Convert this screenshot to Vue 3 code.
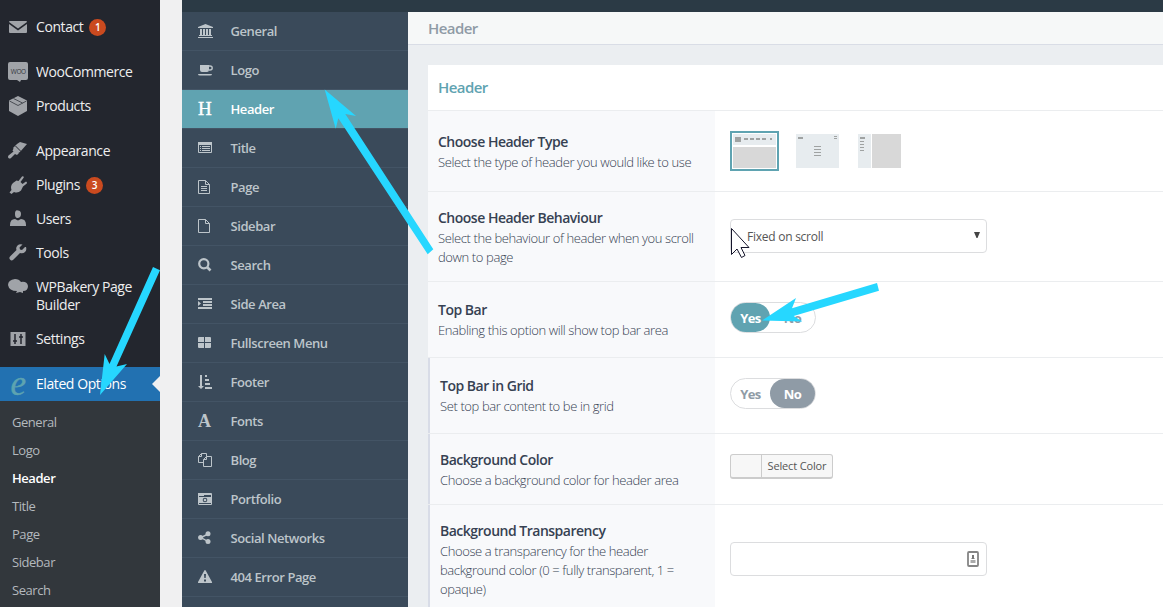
<script setup>
import { ref } from 'vue'

// WordPress admin menu
const adminMenu = [
  { label: 'Contact', icon: 'mail', count: 1, gap: true },
  { label: 'WooCommerce', icon: 'woo' },
  { label: 'Products', icon: 'box', gap: true },
  { label: 'Appearance', icon: 'brush' },
  { label: 'Plugins', icon: 'plug', count: 3 },
  { label: 'Users', icon: 'user' },
  { label: 'Tools', icon: 'wrench' },
  { label: 'WPBakery Page Builder', icon: 'bakery' },
  { label: 'Settings', icon: 'sliders', gap: true },
]
const subMenu = ['General', 'Logo', 'Header', 'Title', 'Page', 'Sidebar', 'Search']

// Theme option tabs
const tabs = [
  { label: 'General', icon: 'bank' },
  { label: 'Logo', icon: 'coffee' },
  { label: 'Header', glyph: 'H' },
  { label: 'Title', icon: 'list' },
  { label: 'Page', icon: 'filetext' },
  { label: 'Sidebar', icon: 'file' },
  { label: 'Search', icon: 'search' },
  { label: 'Side Area', icon: 'indent' },
  { label: 'Fullscreen Menu', icon: 'grid' },
  { label: 'Footer', icon: 'sort' },
  { label: 'Fonts', glyph: 'A' },
  { label: 'Blog', icon: 'copy' },
  { label: 'Portfolio', icon: 'camera' },
  { label: 'Social Networks', icon: 'share' },
  { label: '404 Error Page', icon: 'warning' },
]
const activeTab = ref('Header')

const topBar = ref(true)
const topBarInGrid = ref(false)
const transparency = ref('')
</script>

<template>
  <div class="app">
    <!-- Admin menu -->
    <nav class="admin">
      <a v-for="item in adminMenu" :key="item.label" class="admin-item" :class="{ gap: item.gap }">
        <svg class="admin-icon" viewBox="0 0 20 20" width="20" height="20">
          <path v-if="item.icon === 'mail'" d="M2 4h16q1 0 1 1l-9 6.500-9-6.500q0-1 1-1zM1 7l9 6.500 9-6.500v8q0 1-1 1H2q-1 0-1-1z" />
          <g v-else-if="item.icon === 'woo'">
            <path d="M2 0h16q2 0 2 2v14q0 2-2 2h-5l-1 2-3-2H2q-2 0-2-2V2q0-2 2-2z" />
            <text x="2.800" y="11.500" class="woo">WOO</text>
          </g>
          <g v-else-if="item.icon === 'box'">
            <path d="M10 0l9 4.500v10.500l-9 5-9-5V4.500z" />
            <path d="M1.500 5l8.500 4.500L18.500 5M5.500 2.500l9 4.500" class="cut fine" />
          </g>
          <g v-else-if="item.icon === 'brush'">
            <path d="M9 3l3-2 7 2-7 8-2 1-5-5z" />
            <path d="M6 7l5 5-2 2-2-1-4 4q-1.500 1-2.500 0t0-2.500l5-4-1-1z" />
            <path d="M7.500 5l6 6" class="cut" />
          </g>
          <path v-else-if="item.icon === 'plug'" d="M10.500 6l3.500-4.500q1.800-.600 1.800 1L12.500 7l2 2 3.500-2.500q1.500.300.800 2L15 11.500 13 15.500q-3 3-7 1.500l-2.500 2-2-1.500 2-2.500q-1.500-4 1.500-7l3.500-2.500z" />
          <path v-else-if="item.icon === 'user'" d="M10 1.500q3 0 3 3.500t-3 4-3-4 3-3.500zM7 10l3 1.500 3-1.500q5 0 5 6v1H2v-1q0-6 5-6z" />
          <path v-else-if="item.icon === 'wrench'" d="M17 4l-3 3-2-.500-.500-2 3-3q-3-1-5 1t-1 4.500l-6 6q-2 1.500-.500 3.500t3.500 0l6.500-6.500q3 1 5-1t1-5z" />
          <path v-else-if="item.icon === 'bakery'" d="M7 2q4 0 6 3 6-1 7 4 0 5-5 5v2l-3-1-4 1 1-2q-8 0-9-6 0-5 7-6z" />
          <g v-else>
            <path d="M2.500 3h15v14h-15z" />
            <path d="M7 5v10M13 5v10M5 12h4M11 8h4" class="cut bold" />
          </g>
        </svg>
        <span class="admin-label">{{ item.label }}</span>
        <span v-if="item.count" class="count">{{ item.count }}</span>
      </a>
      <a class="admin-item current">
        <span class="elated">e</span>
        <span class="admin-label">Elated Options</span>
      </a>
      <ul class="submenu">
        <li v-for="name in subMenu" :key="name" :class="{ active: name === activeTab }">{{ name }}</li>
      </ul>
    </nav>

    <div class="gutter"></div>

    <div class="options">
      <div class="topline"></div>
      <div class="body">
        <!-- Tabs -->
        <nav class="tabs">
          <a
            v-for="tab in tabs"
            :key="tab.label"
            class="tab"
            :class="{ active: tab.label === activeTab }"
            @click="activeTab = tab.label"
          >
            <span v-if="tab.glyph" class="glyph" :class="{ heavy: tab.glyph === 'A' }">{{ tab.glyph }}</span>
            <svg v-else class="tab-icon" viewBox="0 0 16 16" width="16" height="16">
              <path v-if="tab.icon === 'bank'" d="M7.500 1L15 4v1H0V4zM2 6h2v6h1V6h2v6h1V6h2v6h1V6h2v6h1v1H1v-1h1zM0 14h15v1H0z" />
              <g v-else-if="tab.icon === 'coffee'">
                <path d="M2 3h9v5q0 2-2 2H4q-2 0-2-2zM0 12h14q0 1.500-2 1.500H2Q0 13.500 0 12z" />
                <path d="M11 4h1q2.200 0 2.200 2T12 8h-1" class="line" />
              </g>
              <g v-else-if="tab.icon === 'list'">
                <path d="M.5 2.500h13v10H.5z" class="line thin" />
                <path d="M0 2h14v3H0zM2 6h1v1H2zM4 6h8v1H4zM2 8h1v1H2zM4 8h8v1H4zM2 10h1v1H2zM4 10h8v1H4z" />
              </g>
              <path v-else-if="tab.icon === 'filetext'" d="M.5 1.500h7l4 4v9H.5zM7.500 1.500v4h4M3 7.500h6M3 9.500h6M3 11.500h6" class="line thin" />
              <path v-else-if="tab.icon === 'file'" d="M.5 1.500h7l4 4v9H.5zM7.500 1.500v4h4" class="line thin" />
              <g v-else-if="tab.icon === 'search'">
                <circle cx="5.800" cy="6.800" r="4.600" class="line wide" />
                <path d="M9 10l3.500 3.500" class="line widest" />
              </g>
              <path v-else-if="tab.icon === 'indent'" d="M0 2h14v2H0zM5 5h9v2H5zM5 8h9v2H5zM0 11h14v2H0zM0 5l3 2.500L0 10z" />
              <path v-else-if="tab.icon === 'grid'" d="M1 2h5v5H0V3q0-1 1-1zM7 2h5q1 0 1 1v4H7zM0 8h6v5H1q-1 0-1-1zM7 8h6v4q0 1-1 1H7z" />
              <path v-else-if="tab.icon === 'sort'" d="M2 1h2v11h2l-3 3-3-3h2zM7 1h2v2H7zM7 5h4v2H7zM7 9h5v2H7zM7 13h7v2H7z" />
              <path v-else-if="tab.icon === 'copy'" d="M5.500 10.500h-5v-6l3-3h5v3M3.500 1.500v3h-3M5.500 14.500h8v-10h-5l-3 3zM8.500 4.500v3h-3" class="line thin" />
              <g v-else-if="tab.icon === 'camera'">
                <path d="M.5 2.500h13v11H.5z" class="line thin" />
                <path d="M0 2h5v1h9v1H6v1H0zM1 6h12v6H1z" />
                <circle cx="7" cy="9" r="2.300" class="hole" />
                <circle cx="7" cy="9" r="1.300" />
              </g>
              <g v-else-if="tab.icon === 'share'">
                <path d="M10 4L3 7.500l7 4" class="line" />
                <circle cx="10" cy="3.700" r="2.500" /><circle cx="2.600" cy="7.600" r="2.500" /><circle cx="10" cy="11.500" r="2.500" />
              </g>
              <path v-else fill-rule="evenodd" d="M6.300 1.500Q7 .5 7.700 1.500L14 13q.3 1-.7 1H.7q-1 0-.7-1zM6 5l.3 4h1.400L8 5zM6 10.500v2h2v-2z" />
            </svg>
            <span>{{ tab.label }}</span>
          </a>
        </nav>

        <!-- Options form -->
        <main class="content">
          <div class="title-bar"><h1>Header</h1></div>
          <section class="panel">
            <h2>Header</h2>

            <div class="row type-row">
              <div class="info">
                <h4>Choose Header Type</h4>
                <p>Select the type of header you would like to use</p>
              </div>
              <div class="field types">
                <svg class="type chosen" width="49" height="40" viewBox="0 0 49 40">
                  <path d="M1 1h47v38H1z" class="ring" />
                  <path d="M3 3h43v11H3z" class="pale" />
                  <path d="M3 16h43v21H3z" class="gray" />
                  <path d="M5 6h6v5H5zM14 7h4v2h-4zM20 7h4v2h-4zM26 7h4v2h-4zM32 7h4v2h-4zM40 7h2v2h-2z" class="dark" />
                </svg>
                <svg class="type" width="43" height="34" viewBox="0 0 43 34">
                  <path d="M0 0h43v34H0z" class="pale" />
                  <path d="M2 3h5v2H2zM38 2h3v1h-3zM38 4h3v1h-3zM18 12h7v1h-7zM18 15h7v1h-7zM18 18h7v1h-7zM18 21h7v1h-7z" class="dark" />
                </svg>
                <svg class="type" width="43" height="34" viewBox="0 0 43 34">
                  <path d="M0 0h13v34H0z" class="pale" />
                  <path d="M14 0h29v34H14z" class="gray" />
                  <path d="M2 3h5v2H2zM2 7h4v1H2zM2 10h4v1H2zM2 13h4v1H2zM2 16h4v1H2z" class="dark" />
                </svg>
              </div>
            </div>

            <div class="row behaviour-row">
              <div class="info">
                <h4>Choose Header Behaviour</h4>
                <p>Select the behaviour of header when you scroll down to page</p>
              </div>
              <div class="field">
                <div class="select">
                  <span>Fixed on scroll</span>
                  <svg width="6" height="6" viewBox="0 0 6 6"><path d="M0 0h6L3.500 6h-1z" fill="#444" /></svg>
                </div>
              </div>
            </div>

            <div class="row switch-row">
              <div class="info">
                <h4>Top Bar</h4>
                <p>Enabling this option will show top bar area</p>
              </div>
              <div class="field">
                <div class="switch">
                  <span class="yes" :class="{ on: topBar }" @click="topBar = true">Yes</span>
                  <span class="no" :class="{ on: !topBar }" @click="topBar = false">No</span>
                </div>
              </div>
            </div>

            <div class="row switch-row nested">
              <div class="info">
                <h4>Top Bar in Grid</h4>
                <p>Set top bar content to be in grid</p>
              </div>
              <div class="field">
                <div class="switch">
                  <span class="yes" :class="{ on: topBarInGrid }" @click="topBarInGrid = true">Yes</span>
                  <span class="no" :class="{ on: !topBarInGrid }" @click="topBarInGrid = false">No</span>
                </div>
              </div>
            </div>

            <div class="row color-row nested">
              <div class="info">
                <h4>Background Color</h4>
                <p>Choose a background color for header area</p>
              </div>
              <div class="field">
                <button class="color"><span>Select Color</span></button>
              </div>
            </div>

            <div class="row alpha-row nested">
              <div class="info">
                <h4>Background Transparency</h4>
                <p>Choose a transparency for the header background color (0 = fully transparent, 1 = opaque)</p>
              </div>
              <div class="field">
                <div class="input">
                  <input v-model="transparency" type="text" />
                  <svg width="12" height="16" viewBox="0 0 12 16">
                    <rect x="1" y="1" width="10" height="14" rx="1" fill="#fff" stroke="#858585" stroke-width="1.800" />
                    <path d="M5 4h2v3l1 1H4l1-1z" fill="#777" />
                    <path d="M3.500 9h5v3h-5z" fill="#aaa" />
                  </svg>
                </div>
              </div>
            </div>
          </section>
        </main>
      </div>
    </div>

    <!-- Arrows and pointer above the page -->
    <svg class="overlay" width="1163" height="607" viewBox="0 0 1163 607">
      <g fill="#26d7ff">
        <path d="M324.700 89.500L356 116l-10.700-2 88 135.300-5.600 5-89.400-136-2.600 10.500z" />
        <path d="M100 395l4.700-41 4.800 10L153 267l7 3.300-43.500 96.200 10.500-2.500z" />
        <path d="M762 320.500L796 298l-4 10.300 85-25.300 2 7.700-85.300 25.300 8.600 5.500z" />
      </g>
      <path d="M731.500 228.500v26l5.500-5.500 4.500 8.500 3.500-2-4-8h8z" fill="#fff" stroke="#15152b" />
    </svg>
  </div>
</template>

<style>
body {
  margin: 0;
  overflow: hidden;
}
</style>

<style scoped>
.app {
  position: relative;
  display: flex;
  height: 607px;
  overflow: hidden;
  font-family: 'Open Sans', 'Noto Sans', sans-serif;
}
h1, h2, h4, p, ul {
  margin: 0;
  padding: 0;
}

/* Admin menu */
.admin {
  width: 160px;
  flex: none;
  padding-top: 10px;
  box-sizing: border-box;
  background: #23262e;
  color: #eee;
}
.admin-item {
  display: flex;
  align-items: flex-start;
  padding: 8px 0 8px 8px;
  font-size: 14px;
  line-height: 18px;
  letter-spacing: -0.420px;
}
.admin-item.gap {
  margin-bottom: 11px;
}
.admin-icon {
  flex: none;
  margin: -1px 8px -1px 0;
  fill: #a0a3a8;
}
.admin-label {
  max-width: 112px;
}
.woo {
  font: 6.500px 'Open Sans', sans-serif;
  fill: #33363d;
}
.cut {
  fill: none;
  stroke: #23262e;
  stroke-width: 1;
}
.cut.bold {
  stroke-width: 1.500;
}
.cut.fine {
  stroke-width: 0.700;
}
.count {
  width: 17px;
  height: 17px;
  margin: 1px 0 0 6px;
  border-radius: 50%;
  background: #ca4a1f;
  color: #fff;
  font-size: 10px;
  font-weight: 600;
  line-height: 17px;
  text-align: center;
  letter-spacing: 0;
}
.admin-item.current {
  position: relative;
  background: #2271b1;
  color: #fff;
}
.admin-item.current::after {
  content: '';
  position: absolute;
  right: 0;
  top: 9px;
  border: 8px solid transparent;
  border-left: 0;
  border-right-color: #f0f0f1;
}
.elated {
  width: 20px;
  margin-right: 8px;
  color: #5da3b0;
  font: italic 35px/18px 'Liberation Serif', serif;
  text-align: center;
  -webkit-text-stroke: 0.400px;
}
.submenu {
  height: 206px;
  padding-top: 7px;
  box-sizing: border-box;
  background: #32373c;
  list-style: none;
}
.submenu li {
  height: 28px;
  padding-left: 12px;
  color: #b4b9be;
  font-size: 13px;
  line-height: 28px;
  letter-spacing: -0.450px;
}
.submenu li.active {
  color: #fff;
  font-weight: 600;
}
.gutter {
  width: 22px;
  flex: none;
  background: #f0f0f1;
}

/* Theme options */
.options {
  flex: 1;
  display: flex;
  flex-direction: column;
}
.topline {
  height: 12px;
  flex: none;
  background: #2b3a45;
}
.body {
  flex: 1;
  display: flex;
}
.tabs {
  width: 226px;
  flex: none;
  background: #3a4a5a;
}
.tab {
  display: flex;
  align-items: center;
  height: 38px;
  padding-left: 16px;
  border-bottom: 1px solid #435465;
  color: #bdc5ca;
  font-size: 13px;
  font-weight: 600;
  letter-spacing: -0.420px;
}
.tab.active {
  background: #60a3b1;
  color: #fff;
}
.tab-icon {
  margin-right: 16.500px;
  fill: #bdc5ca;
}
.glyph {
  width: 32.500px;
  font: 19px/20px 'Liberation Serif', serif;
  -webkit-text-stroke: 0.400px;
}
.glyph.heavy {
  font-size: 18px;
  font-weight: bold;
  -webkit-text-stroke: 0;
}
.line {
  fill: none;
  stroke: #bdc5ca;
  stroke-width: 1.400;
}
.line.thin {
  stroke-width: 1;
}
.line.wide {
  stroke-width: 2.200;
}
.line.widest {
  stroke-width: 2.600;
}
.hole {
  fill: #3a4a5a;
}

.content {
  flex: 1;
  background: #ebeef1;
}
.title-bar {
  height: 32px;
  padding-left: 20px;
  border-bottom: 1px solid #d9dde6;
  background: #f6f8f8;
}
.title-bar h1 {
  color: #8f9ba6;
  font-size: 15px;
  font-weight: 600;
  line-height: 33px;
  letter-spacing: -0.550px;
}
.panel {
  margin: 20px 0 0 20px;
  background: #fff;
}
.panel h2 {
  height: 45px;
  padding-left: 10px;
  border-bottom: 1px solid #ebedef;
  color: #5fa3b1;
  font-size: 15px;
  font-weight: 600;
  line-height: 45px;
  letter-spacing: -0.550px;
}
.row {
  display: flex;
  border-bottom: 1px solid #ebedef;
}
.type-row { height: 80px; }
.behaviour-row { height: 89px; }
.switch-row { height: 75px; }
.color-row { height: 70px; }
.alpha-row { height: 109px; }
.info {
  width: 287px;
  display: flex;
  flex-direction: column;
  justify-content: center;
  padding: 0 14px 0 10px;
  box-sizing: border-box;
  background: #f8f9fb;
  color: #364152;
}
.nested .info {
  border-left: 2px solid #d8dce7;
}
.info h4 {
  font-size: 14px;
  font-weight: 600;
  line-height: 20px;
  letter-spacing: -0.500px;
}
.info p {
  margin: 1px 0 -1px;
  font-size: 13px;
  font-weight: 300;
  line-height: 19px;
  letter-spacing: -0.390px;
}
.field {
  flex: 1;
  display: flex;
  align-items: center;
  padding-left: 15px;
}
.type {
  margin-right: 19px;
}
.type.chosen {
  margin-right: 17px;
}
.ring {
  fill: #fff;
  stroke: #5fa3b1;
  stroke-width: 2;
}
.pale { fill: #e7ecef; }
.gray { fill: #d8d8d8; }
.dark { fill: #9fa2a2; }
.select,
.input {
  display: flex;
  align-items: center;
  justify-content: space-between;
  width: 257px;
  height: 34px;
  margin-bottom: 2px;
  padding: 0 6px 0 16px;
  box-sizing: border-box;
  border: 1px solid #dcdddf;
  border-radius: 4px;
  background: #fff;
  color: #555;
  font-size: 12px;
  letter-spacing: -0.250px;
}
.input {
  padding-right: 7px;
}
.select span {
  padding-top: 2px;
}
.select svg {
  margin-bottom: 1px;
}
.input input {
  width: 200px;
  border: 0;
  outline: 0;
}
.switch {
  display: flex;
  width: 86px;
  height: 31px;
  margin-bottom: 4px;
  box-sizing: border-box;
  border: 1px solid #dcdddf;
  border-radius: 16px;
  color: #8f9ba6;
  font-size: 13px;
  font-weight: 700;
  line-height: 31px;
  text-align: center;
  letter-spacing: -0.600px;
}
.switch span {
  border-radius: 15px;
}
.yes { width: 39px; }
.no { width: 45px; }
.switch .on { color: #fff; }
.yes.on { background: #60a3b1; }
.no.on { background: #8f9ba6; }
.color {
  display: flex;
  width: 103px;
  height: 25px;
  margin-bottom: 6px;
  padding: 0 0 0 30px;
  border: 1px solid #ccc;
  border-bottom-width: 2px;
  border-radius: 3px;
  background: #f7f7f7;
  color: #555;
  font: 11px/22px 'Open Sans', sans-serif;
  letter-spacing: -0.150px;
}
.color span {
  flex: 1;
  border-left: 1px solid #ccc;
}

.overlay {
  position: absolute;
  left: 0;
  top: 0;
  pointer-events: none;
}
</style>
